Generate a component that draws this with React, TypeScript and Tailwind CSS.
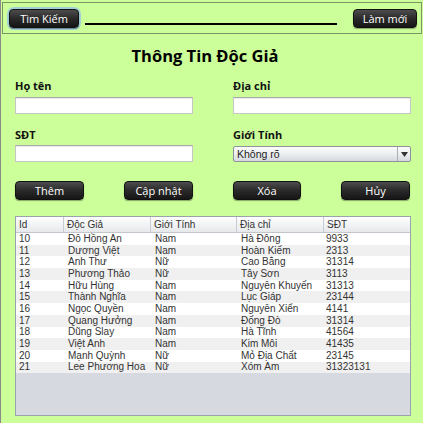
import React from "react";

const rows: [number, string, string, string, string][] = [
  [10, "Đỗ Hồng An", "Nam", "Hà Đông", "9933"],
  [11, "Dương Việt", "Nam", "Hoàn Kiếm", "2313"],
  [12, "Anh Thư", "Nữ", "Cao Bằng", "31314"],
  [13, "Phương Thảo", "Nữ", "Tây Sơn", "3113"],
  [14, "Hữu Hùng", "Nam", "Nguyễn Khuyến", "31313"],
  [15, "Thành Nghĩa", "Nam", "Lục Giáp", "23144"],
  [16, "Ngọc Quyền", "Nam", "Nguyễn Xiển", "4141"],
  [17, "Quang Hưởng", "Nam", "Đống Đò", "31314"],
  [18, "Dũng Slay", "Nam", "Hà Tĩnh", "41564"],
  [19, "Việt Anh", "Nam", "Kim Môi", "41435"],
  [20, "Mạnh Quỳnh", "Nữ", "Mỏ Địa Chất", "23145"],
  [21, "Lee Phương Hoa", "Nữ", "Xóm Ấm", "31323131"],
];

const ui = { fontFamily: '"Open Sans", "Noto Sans", sans-serif' };
const tbl = { fontFamily: '"Liberation Sans", Arial, sans-serif' };

function DarkButton({ label, className = "" }: { label: string; className?: string }) {
  return (
    <div
      className={
        "flex items-center justify-center h-[19px] rounded-[4px] border border-[#111] bg-gradient-to-b from-[#4d4d4d] via-[#2a2a2a] to-[#161616] text-white text-[11px] leading-none whitespace-nowrap shadow-[0_1px_1px_rgba(0,0,0,0.35)] " +
        className
      }
      style={ui}
    >
      {label}
    </div>
  );
}

function Label({ text }: { text: string }) {
  return (
    <div className="text-[11px] font-bold leading-[14px] text-[#111]" style={ui}>
      {text}
    </div>
  );
}

function Input() {
  return (
    <div className="h-[17px] w-[178px] bg-white border border-[#c6c6c6] border-t-[#a8a8a8] shadow-[inset_0_1px_1px_rgba(0,0,0,0.08)]" />
  );
}

export default function App() {
  const cols = "grid grid-cols-[48px_87px_86px_87px_86px]";
  return (
    <div className="w-[423px] h-[423px] bg-[#ccff99] border-l border-[#8a8a8a] flex flex-col overflow-hidden">
      {/* top bar */}
      <div className="mx-[1px] mt-[2px] h-[32px] border border-[#7d9467] flex items-center pl-[6px] pr-[4px]">
        <div className="rounded-[5px] ring-2 ring-[#8fbdf0]/70">
          <DarkButton label="Tìm Kiếm" className="w-[70px]" />
        </div>
        <div className="ml-[6px] w-[252px] h-[19px] flex items-end pb-[3px]">
          <div className="w-full h-[2px] bg-black" />
        </div>
        <DarkButton label="Làm mới" className="ml-[16px] w-[64px]" />
      </div>

      {/* title */}
      <div
        className="mt-[9px] h-[26px] pr-[14px] text-center text-[16.5px] font-bold leading-[26px] text-black"
        style={ui}
      >
        Thông Tin Độc Giả
      </div>

      {/* form */}
      <div className="mt-[10px] pl-[14px] grid grid-cols-[178px_178px] gap-x-[40px]">
        <div className="flex flex-col">
          <Label text="Họ tên" />
          <div className="mt-[4px]">
            <Input />
          </div>
          <div className="mt-[14px]">
            <Label text="SĐT" />
          </div>
          <div className="mt-[3px]">
            <Input />
          </div>
        </div>
        <div className="flex flex-col">
          <Label text="Địa chỉ" />
          <div className="mt-[4px]">
            <Input />
          </div>
          <div className="mt-[14px]">
            <Label text="Giới Tính" />
          </div>
          <div className="mt-[4px] h-[16px] w-[178px] rounded-[2px] border border-[#8e939b] bg-gradient-to-b from-[#fbfbfb] via-[#eceef0] to-[#d5d9de] flex items-center">
            <span className="flex-1 pl-[3px] text-[10.5px] leading-none text-[#222]" style={tbl}>
              Không rõ
            </span>
            <div className="w-[13px] h-full border-l border-[#a9aeb5] flex items-center justify-center">
              <svg width="7" height="5" viewBox="0 0 7 5">
                <path d="M0 0H7L3.5 5Z" fill="#333" />
              </svg>
            </div>
          </div>
        </div>
      </div>

      {/* action buttons */}
      <div className="mt-[19px] pl-[14px] flex">
        <DarkButton label="Thêm" className="w-[69px]" />
        <DarkButton label="Cập nhật" className="ml-[40px] w-[69px]" />
        <DarkButton label="Xóa" className="ml-[40px] w-[68px]" />
        <DarkButton label="Hủy" className="ml-[40px] w-[69px]" />
      </div>

      {/* table */}
      <div
        className="mt-[16px] ml-[14px] w-[396px] h-[200px] border border-[#9aa3ad] bg-[#d6d9df] flex flex-col"
        style={tbl}
      >
        <div className={cols + " h-[16px] shrink-0 bg-gradient-to-b from-white to-[#e6e8eb] border-b border-[#c2c6cc] text-[10px] text-[#333]"}>
          {["Id", "Độc Giả", "Giới Tính", "Địa chỉ", "SĐT"].map((h, i) => (
            <div
              key={h}
              className={"flex items-center pl-[3px] leading-none whitespace-nowrap " + (i < 4 ? "border-r border-[#c8ccd2]" : "")}
            >
              {h}
            </div>
          ))}
        </div>
        {rows.map((r, idx) => (
          <div
            key={r[0]}
            className={cols + " h-[11.7px] shrink-0 text-[10px] text-[#333] leading-none " + (idx % 2 === 0 ? "bg-white" : "bg-[#f0f0f0]")}
          >
            {r.map((c, i) => (
              <div
                key={i}
                className={"flex items-center whitespace-nowrap overflow-hidden " + (i === 0 ? "pl-[3px]" : i === 4 ? "pl-[2px]" : "pl-[4px]")}
              >
                {c}
              </div>
            ))}
          </div>
        ))}
      </div>
    </div>
  );
}
